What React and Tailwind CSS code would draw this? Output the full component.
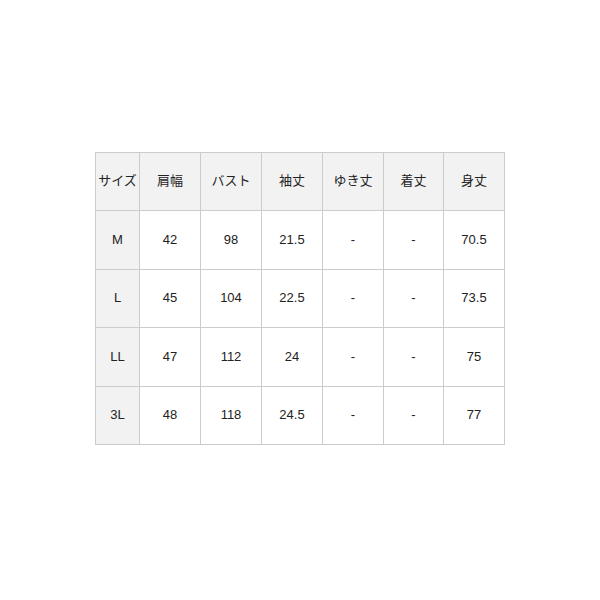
import React from "react";

const head = ["サイズ", "肩幅", "バスト", "袖丈", "ゆき丈", "着丈", "身丈"];
const rows = [
  ["M", "42", "98", "21.5", "-", "-", "70.5"],
  ["L", "45", "104", "22.5", "-", "-", "73.5"],
  ["LL", "47", "112", "24", "-", "-", "75"],
  ["3L", "48", "118", "24.5", "-", "-", "77"],
];

export default function App() {
  return (
    <div
      className="flex h-[600px] w-[600px] items-center justify-center bg-white pb-1 text-[13px] text-[#222]"
      style={{ fontFamily: '"Liberation Sans", "Noto Sans CJK JP", sans-serif' }}
    >
      <div className="grid grid-cols-[43px_60px_60px_60px_60px_59px_60px] grid-rows-[57px_58px_57px_58px_57px] gap-px border border-[#cccccc] bg-[#cccccc]">
        {head.map((h) => (
          <div key={h} className="flex items-center justify-center bg-[#f2f2f2]">
            {h}
          </div>
        ))}
        {rows.map((r) =>
          r.map((c, i) => (
            <div
              key={r[0] + i}
              className={
                i === 0
                  ? "flex items-center justify-center bg-[#f2f2f2]"
                  : "flex items-center justify-center bg-white"
              }
            >
              {c}
            </div>
          ))
        )}
      </div>
    </div>
  );
}
